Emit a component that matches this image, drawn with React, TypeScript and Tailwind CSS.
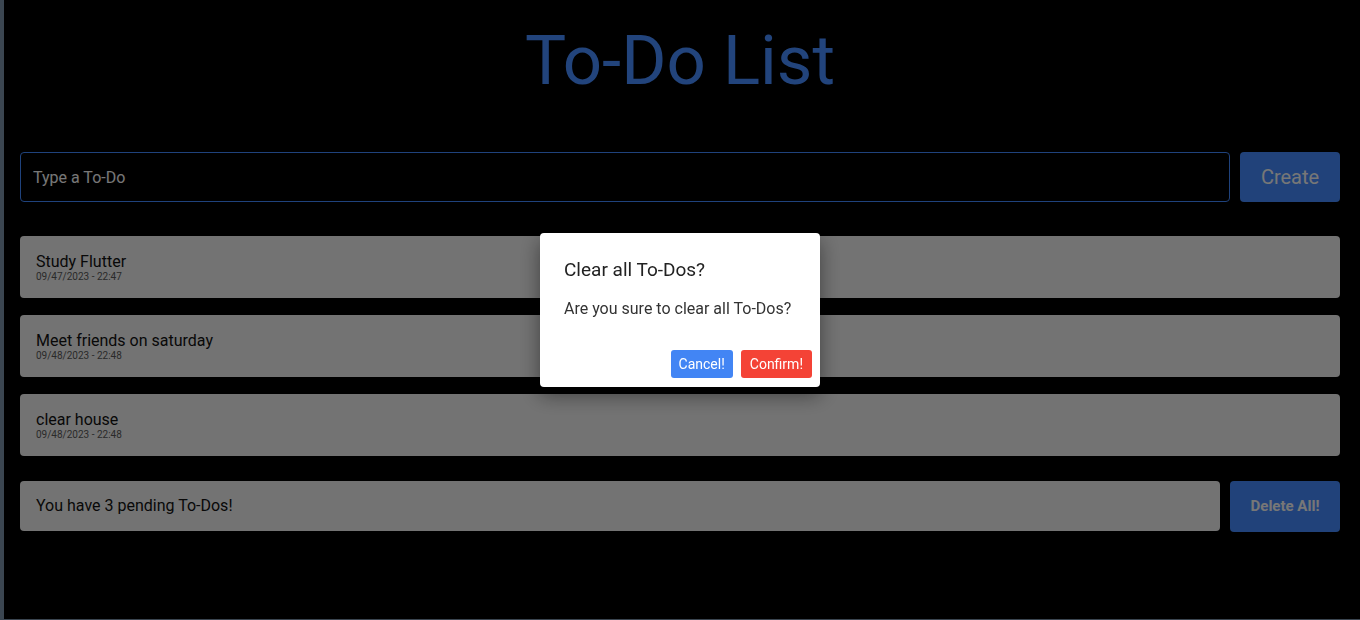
const todos = [
  { id: 1, title: "Study Flutter", date: "09/47/2023 - 22:47" },
  { id: 2, title: "Meet friends on saturday", date: "09/48/2023 - 22:48" },
  { id: 3, title: "clear house", date: "09/48/2023 - 22:48" },
];

function ConfirmDialog() {
  return (
    <div className="fixed inset-0 bg-black/50 flex items-center justify-center">
      <div className="w-[280px] rounded bg-white shadow-[0_8px_20px_rgba(0,0,0,0.45)]">
        <div className="px-6 pt-[25px]">
          <h2 className="text-[19px] leading-6 text-[#222]">Clear all To-Dos?</h2>
          <p className="mt-[15px] text-base leading-6 text-[#333]">Are you sure to clear all To-Dos?</p>
        </div>
        <div className="mt-[29px] flex justify-end gap-2 pr-2 pb-[9px]">
          <button className="h-7 rounded-[3px] bg-[#4285f4] px-2 text-sm text-white">Cancel!</button>
          <button className="h-7 rounded-[3px] bg-[#f44336] px-[9px] text-sm text-white">Confirm!</button>
        </div>
      </div>
    </div>
  );
}

export default function App() {
  return (
    <div className="relative h-[620px] w-full overflow-hidden bg-black border-l-4 border-b border-[#768ca2] font-['Roboto',sans-serif]">
      <div className="pl-4 pr-5">
        <h1 className="mt-[26px] text-center text-[69px] leading-none text-[#4588f8]">To-Do List</h1>

        <div className="mt-[57px] flex gap-[10px]">
          <input
            placeholder="Type a To-Do"
            className="h-[50px] flex-1 rounded border border-[#3f85f8] bg-black px-3 text-base text-white placeholder:text-[#eee] outline-none"
          />
          <button className="h-[50px] w-[100px] rounded bg-[#4285f4] text-xl text-[#eee]">Create</button>
        </div>

        <ul className="mt-[34px] flex flex-col gap-[17px]">
          {todos.map((todo) => (
            <li key={todo.id} className="flex h-[62px] flex-col justify-center rounded bg-[#e6e6e6] px-4">
              <span className="text-base leading-[19px] text-[#111]">{todo.title}</span>
              <span className="text-[10px] leading-[12px] text-[#555]">{todo.date}</span>
            </li>
          ))}
        </ul>

        <div className="mt-[25px] flex gap-[10px]">
          <div className="flex h-[50px] flex-1 items-center rounded bg-[#e6e6e6] px-4 text-base text-[#111]">
            You have 3 pending To-Dos!
          </div>
          <button className="h-[51px] w-[110px] rounded bg-[#4285f4] text-[15px] font-bold text-[#eee]">Delete All!</button>
        </div>
      </div>

      <ConfirmDialog />
    </div>
  );
}
